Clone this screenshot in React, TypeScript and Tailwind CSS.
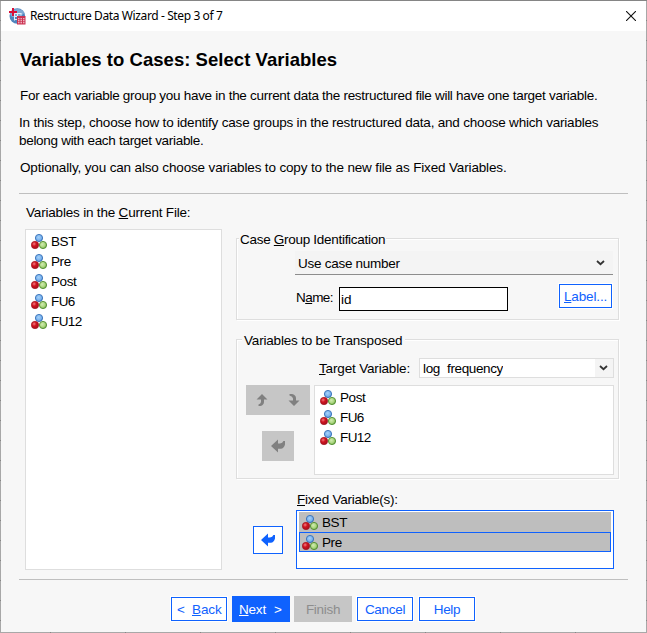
import React from 'react';

function Key({ children }: { children: string }) {
  return <span className="underline decoration-1 underline-offset-1">{children}</span>;
}

function NominalIcon() {
  return (
    <svg className="block shrink-0" width="16" height="16" viewBox="0 0 16 16">
      <defs>
        <radialGradient id="ballBlue" cx="0.45" cy="0.4" r="0.6">
          <stop offset="0" stopColor="#a6d2fa" />
          <stop offset="0.7" stopColor="#78b0ec" />
          <stop offset="1" stopColor="#4f8bd0" />
        </radialGradient>
        <radialGradient id="ballRed" cx="0.38" cy="0.35" r="0.65">
          <stop offset="0" stopColor="#f47c80" />
          <stop offset="0.45" stopColor="#cf1420" />
          <stop offset="1" stopColor="#a80f1c" />
        </radialGradient>
        <radialGradient id="ballGreen" cx="0.4" cy="0.4" r="0.65">
          <stop offset="0" stopColor="#d2ecb0" />
          <stop offset="0.6" stopColor="#a9d57e" />
          <stop offset="1" stopColor="#74ad48" />
        </radialGradient>
      </defs>
      <circle cx="8" cy="4" r="3.6" fill="url(#ballBlue)" stroke="#356fb8" strokeWidth="0.9" />
      <circle cx="4" cy="11" r="3.7" fill="url(#ballRed)" stroke="#9c1420" strokeWidth="0.6" />
      <circle cx="12" cy="11" r="3.6" fill="url(#ballGreen)" stroke="#4f8b2c" strokeWidth="0.9" />
    </svg>
  );
}

function AppIcon() {
  return (
    <svg className="block shrink-0" width="17" height="17" viewBox="0 0 17 17">
      <circle cx="8.3" cy="8" r="7.8" fill="#4f84bd" />
      <path d="M1 6A8 8 0 0 1 15.4 5L11 9H3Z" fill="#7fa9d4" />
      <path d="M5.5 5.5h7M5.5 8.5h3M5.5 11.5h3M5.5 5.5v7M8.5 5.5v3M12 5.5v2" stroke="#e3eef9" strokeWidth="1" />
      <path d="M0 4h8M4 0v8" stroke="#d90f37" strokeWidth="2" />
      <rect x="8" y="8" width="8.5" height="8.5" fill="#cc3352" />
      <path d="M9 10.7h7M9 12.7h7M9 14.7h7" stroke="#f7dbe1" strokeWidth="1.1" strokeDasharray="1.5 1" />
    </svg>
  );
}

function Chevron() {
  return (
    <svg className="block shrink-0" width="9" height="6" viewBox="0 0 9 6">
      <path d="M1 1l3.5 3.2L8 1" fill="none" stroke="#333" strokeWidth="1.8" />
    </svg>
  );
}

function LeftArrow({ color }: { color: string }) {
  return (
    <svg className="block" width="14" height="14" viewBox="0 0 14 14">
      <path d="M0 7L7 0.5V4.5H9Q11.6 4.3 12.4 2H14V5.5Q13 9.6 9.8 9.8H7V13.5Z" fill={color} />
    </svg>
  );
}

function UpArrow() {
  return (
    <svg className="block" width="12" height="12" viewBox="0 0 12 12">
      <path d="M6 0L11.5 5.5H8V8Q7.8 11 4.5 12H2.5V10.5Q4.8 9.6 5 8V5.5H0.5Z" fill="#808080" />
    </svg>
  );
}

function DownArrow() {
  return (
    <svg className="block" width="12" height="12" viewBox="0 0 12 12">
      <path d="M6 12L0.5 6.5H5V4.5Q4.8 2.4 1.5 1.4V0H4Q7.8 0.8 8 4V6.5H11.5Z" fill="#808080" />
    </svg>
  );
}

function VariableRow({ name }: { name: string }) {
  return (
    <div className="flex h-5 items-center gap-1">
      <NominalIcon />
      <span className={name.startsWith('FU') ? 'tracking-[-0.6px]' : 'tracking-[-0.4px]'}>{name}</span>
    </div>
  );
}

export default function App() {
  return (
    <div
      className="h-[633px] w-[647px] bg-[#a8a8a8] bg-[repeating-linear-gradient(to_bottom,#858585_0px,#858585_1px,transparent_1px,transparent_20px),repeating-linear-gradient(to_right,transparent_0px,transparent_50px,#858585_50px,#858585_51px,transparent_51px,transparent_75px)] p-px text-[13.8px] leading-[18px] text-black"
      style={{ fontFamily: '"Liberation Sans", Arial, sans-serif' }}
    >
      <div className="flex h-full flex-col overflow-hidden whitespace-nowrap bg-[#f7f7f7]">
        <header className="flex h-[30px] shrink-0 items-center bg-white pl-2 pr-[10px]">
          <AppIcon />
          <span
            className="ml-1 flex-1 text-[12px] tracking-[-0.39px]"
            style={{ fontFamily: '"Noto Sans", "Open Sans", sans-serif' }}
          >
            Restructure Data Wizard - Step 3 of 7
          </span>
          <svg className="block" width="10" height="10" viewBox="0 0 10 10">
            <path d="M0 0l10 10M10 0L0 10" stroke="#111" strokeWidth="1.1" />
          </svg>
        </header>

        <section className="h-[162px] shrink-0 pl-[19px] pt-[17px] text-[13.5px]">
          <h1 className="text-[18.5px] font-bold leading-6 tracking-[0.04px]">Variables to Cases: Select Variables</h1>
          <p className="mt-[15px]">
            <span className="tracking-[-0.29px]">For each variable group you have in the current data the restructured file will have one target variable.</span>
          </p>
          <p className="-ml-px mt-[9px]">
            <span className="tracking-[-0.2px]">In this step, choose how to identify case groups in the restructured data, and choose which variables</span>
            <br />
            <span className="tracking-[-0.3px]">belong with each target variable.</span>
          </p>
          <p className="mt-[9px]">
            <span className="tracking-[-0.15px]">Optionally, you can also choose variables to copy to the new file as Fixed Variables.</span>
          </p>
        </section>

        <div className="ml-[18px] h-px w-[609px] shrink-0 bg-[#bfbfbf]" />

        <main className="flex h-[385px] shrink-0 pl-6 text-[13.5px]">
          <div className="w-[197px]">
            <div className="mt-[10px] pl-px tracking-[-0.19px]"><span>Variables in the <Key>C</Key>urrent File:</span></div>
            <div className="mt-[7px] h-[341px] border border-[#dedede] bg-white pl-[5px] pt-[2px]">
              {['BST', 'Pre', 'Post', 'FU6', 'FU12'].map((n) => (
                <VariableRow key={n} name={n} />
              ))}
            </div>
          </div>

          <div className="ml-[14px] w-[383px] pt-[44px]">
            <div className="h-[82px] border border-[#dedede] shadow-[1px_1px_0_#ffffff,inset_1px_1px_0_#ffffff]">
              <div className="-mt-[8px] ml-[2px] h-[18px] w-fit bg-[#f7f7f7] px-px tracking-[-0.29px]">
                <span>Case <Key>G</Key>roup Identification</span>
              </div>
              <div className="ml-[58px] mt-[2px] flex h-6 w-[318px] items-center justify-between border-b border-[#8d8d8d] bg-[#f4f4f4] pl-[3px] pr-2">
                <span className="pt-[2px] tracking-[-0.27px]">Use case number</span>
                <Chevron />
              </div>
              <div className="mt-[9px] flex pl-[58px]">
                <div className="w-11 pl-px pt-[5px] tracking-[-0.55px]"><span>N<Key>a</Key>me:</span></div>
                <div className="mt-[3px] flex h-6 w-[169px] items-center border border-black bg-white pl-px pt-[2px]">
                  <span>id</span>
                </div>
                <div className="ml-[51px] flex h-6 w-[53px] items-center border border-[#0f62fe] bg-white pl-1 pt-[2px] tracking-[-0.15px] text-[#0f62fe] shadow-[0_0_0_1px_#fff]">
                  <span><Key>L</Key>abel...</span>
                </div>
              </div>
            </div>

            <div className="mt-[19px] h-[140px] border border-[#dedede] shadow-[1px_1px_0_#ffffff,inset_1px_1px_0_#ffffff]">
              <div className="-mt-[8px] ml-[5px] h-[18px] w-fit bg-[#f7f7f7] pl-[2px] pr-[3px] tracking-[-0.19px]">
                <span>Variables to be Transposed</span>
              </div>
              <div className="mt-[8px] flex">
                <div className="ml-[82px] w-[100px] pt-[2px] tracking-[-0.16px]"><span><Key>T</Key>arget Variable:</span></div>
                <div className="flex h-5 w-[195px] justify-between overflow-hidden border border-[#dedede] bg-white pl-[3px]">
                  <div className="h-[17px] overflow-hidden pt-px tracking-[-0.37px]">
                    <span>log<span className="text-transparent">_</span>frequency</span>
                  </div>
                  <div className="flex w-[18px] justify-center bg-[#f4f4f4] pr-px pt-[6px]"><Chevron /></div>
                </div>
              </div>
              <div className="mt-[7px] flex pl-[9px]">
                <div className="w-[68px]">
                  <div className="flex h-[30px] w-16 items-center bg-[#c6c6c6]">
                    <div className="flex w-8 justify-center"><UpArrow /></div>
                    <div className="flex w-8 justify-center"><DownArrow /></div>
                  </div>
                  <div className="ml-4 mt-4 flex h-[30px] w-8 items-center justify-center bg-[#c6c6c6]">
                    <LeftArrow color="#808080" />
                  </div>
                </div>
                <div className="h-[90px] w-[300px] border border-[#dedede] bg-white pl-[5px] pt-[2px]">
                  {['Post', 'FU6', 'FU12'].map((n) => (
                    <VariableRow key={n} name={n} />
                  ))}
                </div>
              </div>
            </div>

            <div className="mt-[12px] pl-[61px] tracking-[-0.22px]"><span><Key>F</Key>ixed Variable(s):</span></div>
            <div className="mt-px flex pl-[17px]">
              <div className="mt-4 flex h-7 w-[30px] items-center justify-center border border-[#0f62fe] bg-white">
                <LeftArrow color="#0f62fe" />
              </div>
              <div className="ml-[13px] h-[59px] w-[318px] border border-[#0f62fe] bg-white px-[2px] pt-px">
                <div className="h-5 bg-[#bebebe] pl-[3px] pt-px"><VariableRow name="BST" /></div>
                <div className="h-5 border border-[#0f62fe] bg-[#bebebe] pl-[2px]"><VariableRow name="Pre" /></div>
              </div>
            </div>
          </div>
        </main>

        <div className="ml-[18px] h-px w-[609px] shrink-0 bg-[#bfbfbf]" />

        <footer className="flex items-start pl-[170px] pt-4 text-[13.5px] tracking-[-0.3px]">
          <div className="mt-px flex h-6 w-14 items-center border border-[#0f62fe] bg-white pl-[5px] pt-[2px] text-[#0f62fe] shadow-[0_0_0_1px_#fff]">
            <span className="w-[15px]">&lt;</span>
            <span className="tracking-[-0.1px]"><Key>B</Key>ack</span>
          </div>
          <div className="ml-[5px] flex h-[26px] w-[58px] items-center bg-[#0f62fe] pl-[7px] pt-[2px] text-white">
            <span className="w-[35px] tracking-[-0.2px]"><Key>N</Key>ext</span>
            <span>&gt;</span>
          </div>
          <div className="ml-1 flex h-[26px] w-[58px] items-center justify-center bg-[#c6c6c6] pt-[2px] text-[#8d8d8d]">
            <span>Finish</span>
          </div>
          <div className="ml-[5px] mt-px flex h-6 w-14 items-center justify-center border border-[#0f62fe] bg-white pt-[2px] text-[#0f62fe] shadow-[0_0_0_1px_#fff]">
            <span>Cancel</span>
          </div>
          <div className="ml-[6px] mt-px flex h-6 w-14 items-center justify-center border border-[#0f62fe] bg-white pt-[2px] text-[#0f62fe] shadow-[0_0_0_1px_#fff]">
            <span>Help</span>
          </div>
        </footer>
      </div>
    </div>
  );
}
